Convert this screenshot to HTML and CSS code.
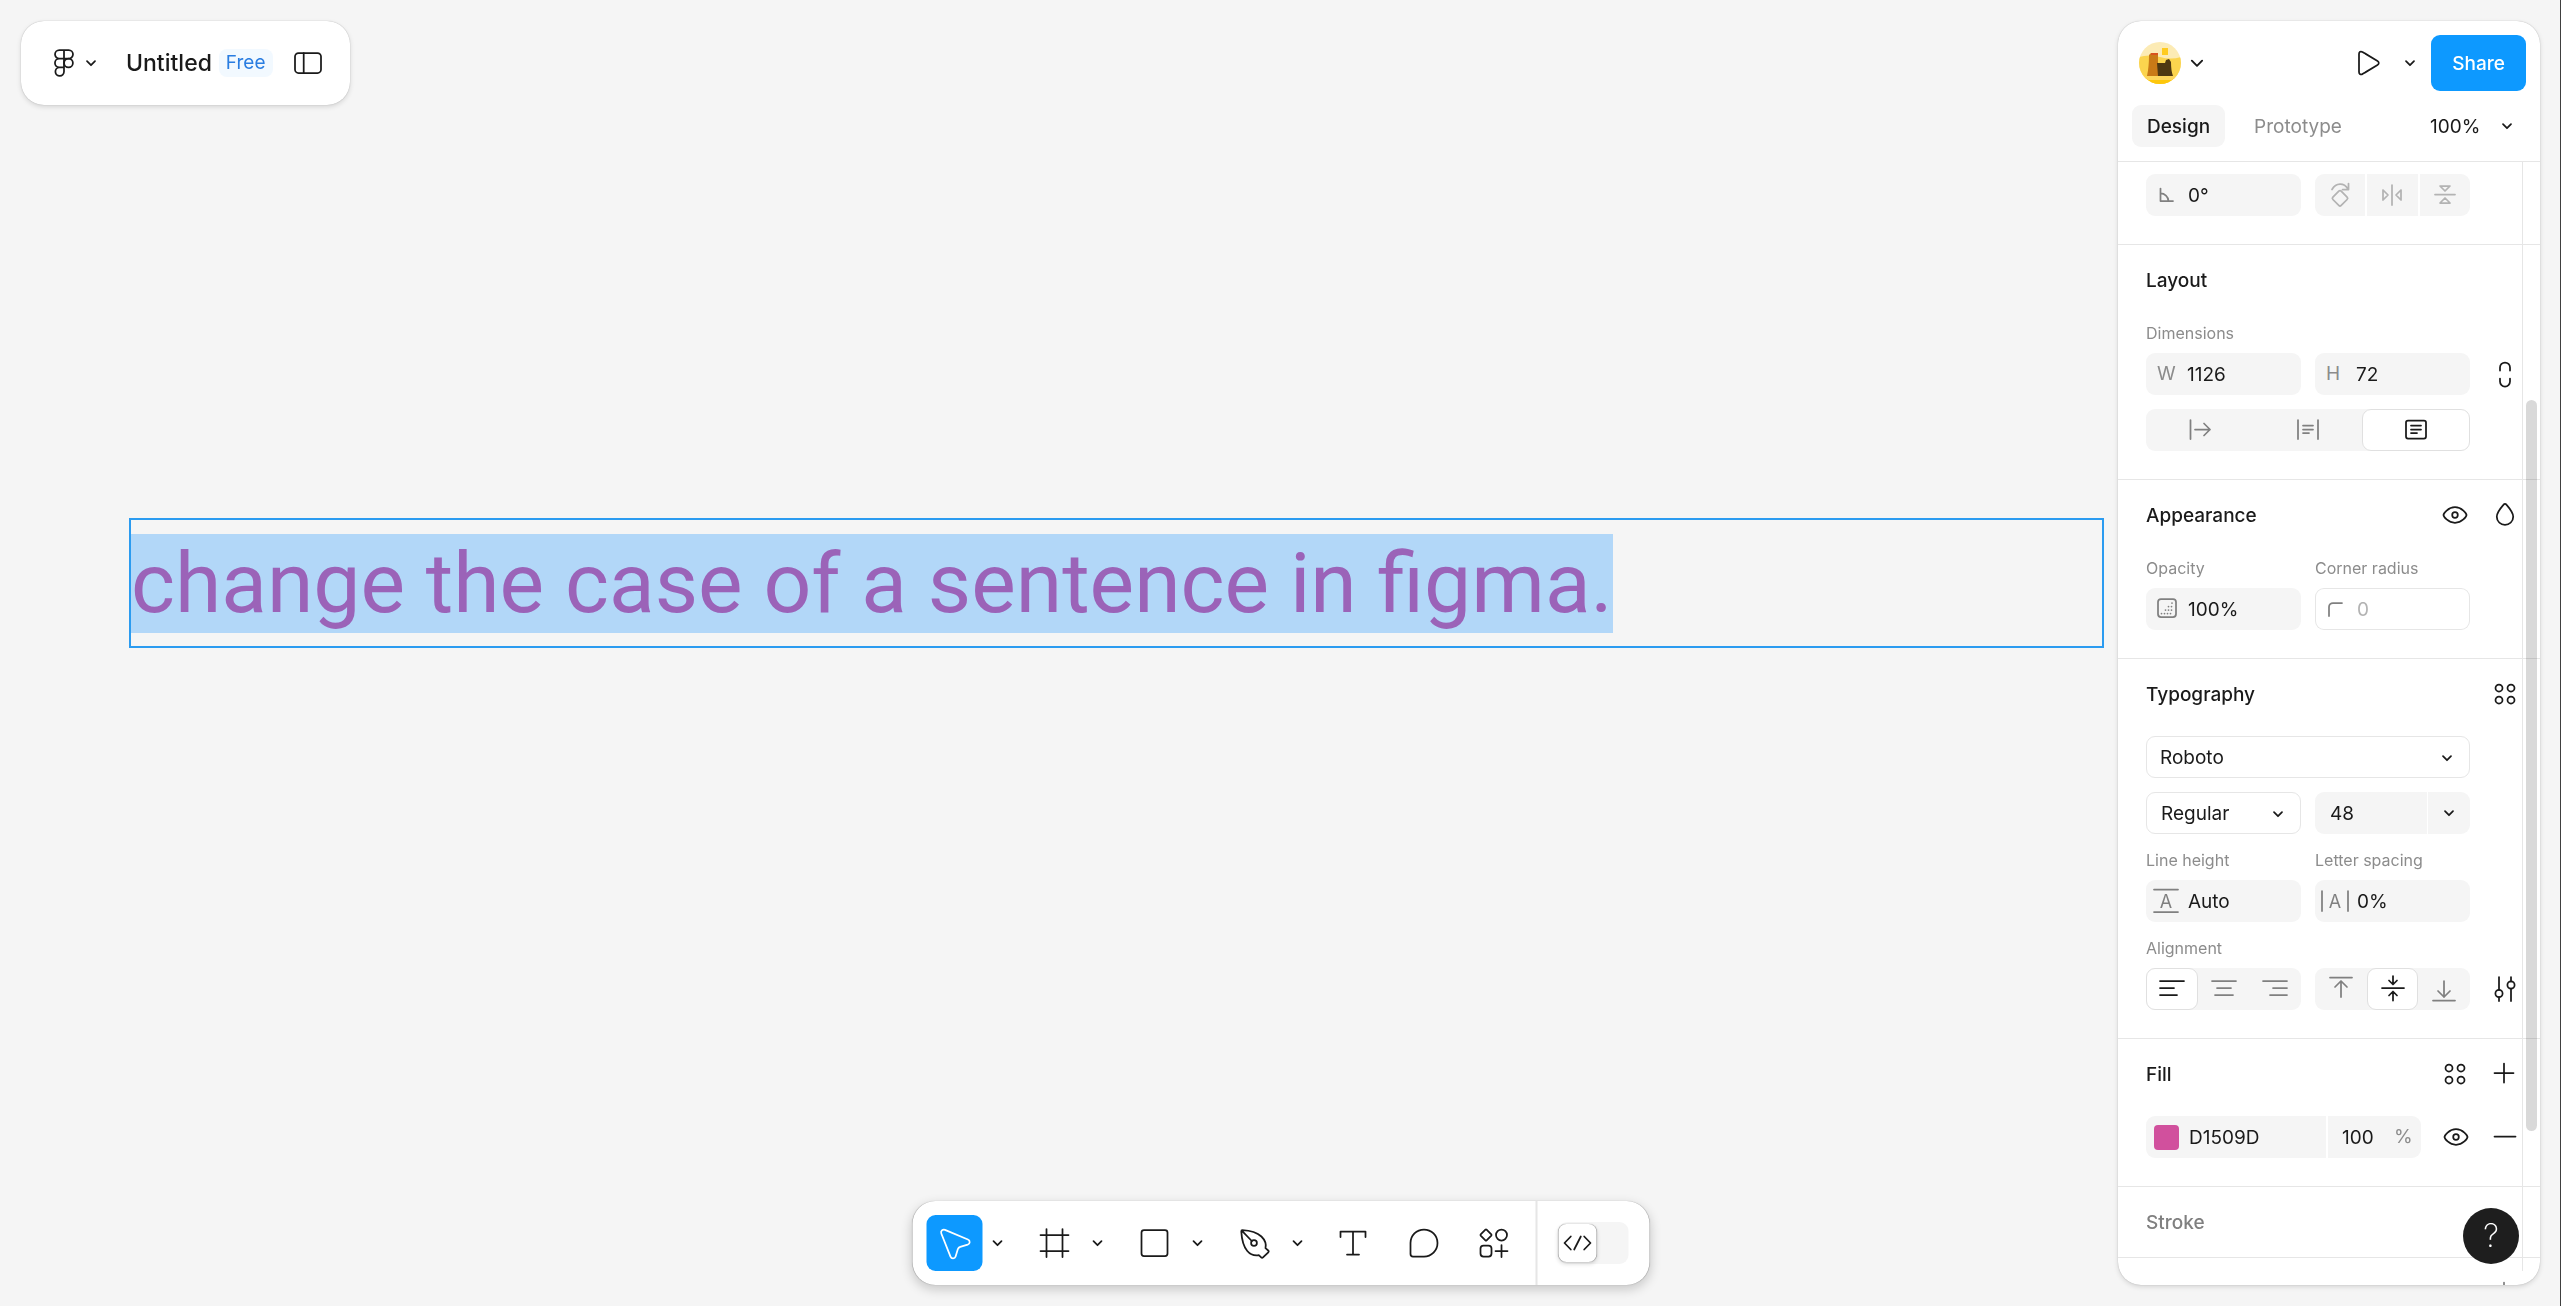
FILE: index.html
```html
<!DOCTYPE html>
<html lang="en">
<head>
    <meta charset="UTF-8">
    <meta name="viewport" content="width=device-width, initial-scale=1.0">
    <title>Untitled</title>
    <link rel="stylesheet" href="styles.css">
</head>
<body>
    <!-- Shared icons -->
    <svg class="sprite" aria-hidden="true">
        <symbol id="chevron" viewBox="0 0 14 14"><path d="M3 5.200l4 4 4-4"/></symbol>
        <symbol id="eye" viewBox="0 0 42 42"><path d="M9.500 21c0-1.500 4.500-7.800 11.500-7.800S32.500 19.500 32.500 21 28 28.800 21 28.800 9.500 22.500 9.500 21z"/><circle cx="21" cy="21" r="2.800"/></symbol>
        <symbol id="styles" viewBox="0 0 42 42"><circle cx="15" cy="15" r="3.500"/><circle cx="27" cy="15" r="3.500"/><circle cx="15" cy="27" r="3.500"/><circle cx="27" cy="27" r="3.500"/></symbol>
        <symbol id="plus" viewBox="0 0 42 42"><path d="M20 10.500v19M10.500 20h19"/></symbol>
    </svg>

    <!-- Canvas -->
    <main class="canvas">
        <div class="text-node"><span>change the case of a sentence in figma.</span></div>
    </main>

    <!-- File bar -->
    <header class="file-bar">
        <button class="menu-btn" aria-label="Main menu">
            <svg class="icon" width="20" height="28" viewBox="0 0 20 28"><path d="M10 1H5.300a4.300 4.300 0 0 0 0 8.600H10zM10 1h4.700a4.300 4.300 0 0 1 0 8.600H10zM10 9.600H5.300a4.300 4.300 0 0 0 0 8.700H10zM10 18.300H5.300A4.300 4.300 0 1 0 10 22.600z"/><circle cx="14.500" cy="14" r="4.400"/></svg>
            <svg class="icon chevron"><use href="#chevron"/></svg>
        </button>
        <span class="file-name">Untitled</span>
        <a class="plan" href="#plan">Free</a>
        <button class="sidebar-btn" aria-label="Toggle sidebar">
            <svg class="icon" width="28" height="22" viewBox="0 0 28 22"><rect x="1" y="1" width="26" height="20" rx="3.500"/><path d="M9.700 1v20"/></svg>
        </button>
    </header>

    <!-- Right panel -->
    <aside class="panel">
        <div class="panel-head">
            <div class="head-row">
                <button class="avatar-btn" aria-label="Account">
                    <svg width="42" height="42" viewBox="0 0 42 42">
                        <clipPath id="round"><circle cx="21" cy="21" r="21"/></clipPath>
                        <g clip-path="url(#round)">
                            <path fill="#fcebb5" d="M0 0h42v42H0z"/>
                            <path fill="#fbd44e" d="M0 15q10-3 21 0t21 0v27H0z"/>
                            <path fill="#fdc70c" d="M0 36h42v6H0z"/>
                            <path fill="#fdd65c" d="M0 34h42v4H0z"/>
                            <path fill="#ffcb1f" d="M23 6h6v7h-6z"/>
                            <path fill="#c97a17" d="M8 34q2-9 2-21l2-2h6l1 2v21z"/>
                            <path fill="#d9531e" d="M12 11h7v2h-7z"/>
                            <path fill="#4e3812" d="M19 34l-1-13h8l1-3 3-1 2 3q0 9 2 14z"/>
                        </g>
                    </svg>
                    <svg class="icon chevron large"><use href="#chevron"/></svg>
                </button>
                <button class="play-btn" aria-label="Present">
                    <svg class="icon" width="22" height="26" viewBox="0 0 22 26"><path d="M1 4v18c0 2 1.600 3 3.400 2.100L19.500 15c1.700-1 1.700-3 0-4L4.400 1.900C2.600.9 1 2 1 4z"/></svg>
                </button>
                <button class="play-menu" aria-label="Present options"><svg class="icon chevron"><use href="#chevron"/></svg></button>
                <button class="share-btn">Share</button>
            </div>
            <div class="head-row">
                <button class="tab active">Design</button>
                <button class="tab">Prototype</button>
                <div class="select zoom">
                    <select aria-label="Zoom"><option>100%</option></select>
                    <svg class="icon chevron"><use href="#chevron"/></svg>
                </div>
            </div>
        </div>

        <div class="panel-body">
            <section class="position">
                <div class="row">
                    <label class="field">
                        <svg class="icon muted" viewBox="0 0 42 42"><path d="M14.500 14.500V27H27M14.500 19.500a8 8 0 0 1 8 7.500"/></svg>
                        <input type="text" value="0°" aria-label="Rotation">
                    </label>
                    <div class="segments split">
                        <button aria-label="Rotate 90°"><svg class="icon faint" viewBox="0 0 42 42"><path d="M22.200 17.200l5.900 5.900a1.700 1.700 0 0 1 0 2.400l-5.900 5.900a1.700 1.700 0 0 1-2.400 0l-5.900-5.900a1.700 1.700 0 0 1 0-2.400l5.900-5.900a1.700 1.700 0 0 1 2.400 0zM13 15.500c4-7 12-7 16-.5M29.500 9.500v6h-6"/></svg></button>
                        <button aria-label="Flip horizontal"><svg class="icon faint" viewBox="0 0 42 42"><path d="M21 11v20M12 16v10l5-5zM30 16v10l-5-5z"/></svg></button>
                        <button aria-label="Flip vertical"><svg class="icon faint" viewBox="0 0 42 42"><path d="M11 20.500h20M16 12h10l-5 5zM16 29h10l-5-5z"/></svg></button>
                    </div>
                </div>
            </section>

            <section>
                <div class="section-head"><h2>Layout</h2></div>
                <div class="labels"><span>Dimensions</span></div>
                <div class="row">
                    <label class="field"><span class="letter">W</span><input type="text" value="1126"></label>
                    <label class="field"><span class="letter">H</span><input type="text" value="72"></label>
                    <button class="tool" aria-label="Lock aspect ratio"><svg class="icon" viewBox="0 0 42 42"><path d="M16 17.500v-3a5 5 0 0 1 10 0v3M16 25.500v3a5 5 0 0 0 10 0v-3"/></svg></button>
                </div>
                <div class="row gap-top">
                    <div class="segments wide">
                        <label><input type="radio" name="resize" aria-label="Auto width"><svg class="icon" viewBox="0 0 42 42"><path d="M11.500 11v19M16 20.500h15M25 14.500l6 6-6 6"/></svg></label>
                        <label><input type="radio" name="resize" aria-label="Auto height"><svg class="icon" viewBox="0 0 42 42"><path d="M11 11v19M31 11v19M16 16.500h10M16 20.500h10M16 24h6"/></svg></label>
                        <label><input type="radio" name="resize" aria-label="Fixed size" checked><svg class="icon" viewBox="0 0 42 42"><rect x="11" y="11.500" width="20" height="18" rx="2"/><path d="M16 16.500h10M16 20.500h10M16 24h6"/></svg></label>
                    </div>
                </div>
            </section>

            <section>
                <div class="section-head">
                    <h2>Appearance</h2>
                    <button class="tool" aria-label="Hide"><svg class="icon"><use href="#eye"/></svg></button>
                    <button class="tool" aria-label="Blend mode"><svg class="icon" viewBox="0 0 42 42"><path d="M21 9.800c-.6 0-1 .3-1.400.8-4.200 4.800-6.800 8.300-6.800 12.100a8.200 8.200 0 0 0 16.400 0c0-3.800-2.600-7.300-6.800-12.100-.4-.5-.8-.8-1.400-.8z"/></svg></button>
                </div>
                <div class="labels"><label for="opacity">Opacity</label><label for="radius">Corner radius</label></div>
                <div class="row">
                    <div class="field">
                        <svg class="icon muted" viewBox="0 0 42 42"><rect x="12" y="11" width="18" height="18" rx="3"/><path class="dots" d="M15.500 25.500h12M19.500 22h8M22.500 18.500h5M26 15h1.500"/></svg>
                        <input type="text" id="opacity" value="100%">
                    </div>
                    <div class="field outlined">
                        <svg class="icon muted" viewBox="0 0 42 42"><path d="M14 28v-9a4 4 0 0 1 4-4h9"/></svg>
                        <input type="text" id="radius" placeholder="0">
                    </div>
                </div>
            </section>

            <section>
                <div class="section-head">
                    <h2>Typography</h2>
                    <button class="tool" aria-label="Text styles"><svg class="icon"><use href="#styles"/></svg></button>
                </div>
                <div class="row inset">
                    <div class="select family">
                        <select aria-label="Font family"><option>Roboto</option></select>
                        <svg class="icon chevron"><use href="#chevron"/></svg>
                    </div>
                </div>
                <div class="row gap-top">
                    <div class="select">
                        <select aria-label="Font style"><option>Regular</option></select>
                        <svg class="icon chevron"><use href="#chevron"/></svg>
                    </div>
                    <div class="field size">
                        <input type="text" value="48" aria-label="Font size">
                        <button aria-label="Font sizes"><svg class="icon chevron"><use href="#chevron"/></svg></button>
                    </div>
                </div>
                <div class="labels spaced"><label for="line-height">Line height</label><label for="spacing">Letter spacing</label></div>
                <div class="row">
                    <div class="field">
                        <svg class="icon muted" viewBox="0 0 42 42"><path d="M8 9.500h24M8 32h24"/><text x="20" y="28">A</text></svg>
                        <input type="text" id="line-height" value="Auto">
                    </div>
                    <div class="field">
                        <svg class="icon muted" viewBox="0 0 42 42"><path d="M7 11v20M33 11v20"/><text x="20" y="28">A</text></svg>
                        <input type="text" id="spacing" value="0%">
                    </div>
                </div>
                <div class="labels spaced"><span>Alignment</span></div>
                <div class="row">
                    <div class="segments">
                        <label><input type="radio" name="align" aria-label="Align left" checked><svg class="icon" viewBox="0 0 42 42"><path d="M9 13h24M9 20h14M9 27h17"/></svg></label>
                        <label><input type="radio" name="align" aria-label="Align center"><svg class="icon" viewBox="0 0 42 42"><path d="M9 13h24M14 20h14M12 27h18"/></svg></label>
                        <label><input type="radio" name="align" aria-label="Align right"><svg class="icon" viewBox="0 0 42 42"><path d="M9 13h24M19 20h14M16 27h17"/></svg></label>
                    </div>
                    <div class="segments">
                        <label><input type="radio" name="valign" aria-label="Align top"><svg class="icon" viewBox="0 0 42 42"><path d="M10 9.500h22M21 29V13M15 19l6-6 6 6"/></svg></label>
                        <label><input type="radio" name="valign" aria-label="Align middle" checked><svg class="icon" viewBox="0 0 42 42"><path d="M10 20h22M21 8v8M17 12.500l4 4 4-4M21 32.500v-8M17 27.500l4-4 4 4"/></svg></label>
                        <label><input type="radio" name="valign" aria-label="Align bottom"><svg class="icon" viewBox="0 0 42 42"><path d="M10 32.500h22M21 13v16M15 23l6 6 6-6"/></svg></label>
                    </div>
                    <button class="tool" aria-label="Type settings"><svg class="icon" viewBox="0 0 42 42"><circle cx="15" cy="25.500" r="3.600"/><circle cx="27" cy="17" r="3.600"/><path d="M15 9v12.900M15 29.100V33M27 9v4.400M27 20.600V33"/></svg></button>
                </div>
            </section>

            <section>
                <div class="section-head">
                    <h2>Fill</h2>
                    <button class="tool" aria-label="Fill styles"><svg class="icon"><use href="#styles"/></svg></button>
                    <button class="tool" aria-label="Add fill"><svg class="icon"><use href="#plus"/></svg></button>
                </div>
                <div class="row inset fill-row">
                    <div class="field color">
                        <span class="swatch"></span>
                        <input type="text" value="D1509D" aria-label="Color">
                        <input class="alpha" type="text" value="100" aria-label="Fill opacity">
                        <span class="percent">%</span>
                    </div>
                    <button class="tool" aria-label="Hide fill"><svg class="icon"><use href="#eye"/></svg></button>
                    <button class="tool" aria-label="Remove fill"><svg class="icon" viewBox="0 0 42 42"><path d="M10.500 20.500h21"/></svg></button>
                </div>
            </section>

            <section class="empty">
                <div class="section-head"><h2>Stroke</h2></div>
            </section>

            <section class="empty">
                <div class="section-head">
                    <button class="tool" aria-label="Add"><svg class="icon muted"><use href="#plus"/></svg></button>
                </div>
            </section>

            <div class="scroll-track"><div class="scroll-thumb"></div></div>
        </div>
    </aside>

    <!-- Toolbar -->
    <nav class="toolbar">
        <div class="tools">
            <div class="tool-group">
                <button class="big active" aria-label="Move"><svg class="icon" viewBox="0 0 56 56"><path d="M14.800 18.500L24 41.600c1 2.400 4.300 2.300 5.100-.2l2.200-7.200c.4-1.200 1.200-2 2.400-2.400l7.500-2.100c2.500-.8 2.700-4.200.2-5.200L18.500 14.900c-2.400-.9-4.600 1.200-3.700 3.600z"/></svg></button>
                <button class="more" aria-label="Move tools"><svg class="icon chevron"><use href="#chevron"/></svg></button>
            </div>
            <div class="tool-group">
                <button class="big" aria-label="Frame"><svg class="icon" viewBox="0 0 56 56"><path d="M20 14v28M36 14v28M14 20h28M14 36h28"/></svg></button>
                <button class="more" aria-label="Region tools"><svg class="icon chevron"><use href="#chevron"/></svg></button>
            </div>
            <div class="tool-group">
                <button class="big" aria-label="Rectangle"><svg class="icon" viewBox="0 0 56 56"><rect x="15" y="15" width="26" height="26" rx="2.500"/></svg></button>
                <button class="more" aria-label="Shape tools"><svg class="icon chevron"><use href="#chevron"/></svg></button>
            </div>
            <div class="tool-group">
                <button class="big" aria-label="Pen"><svg class="icon" viewBox="0 0 56 56"><path d="M15.700 15.200c8.500.4 15 2.400 19.200 6.300 3.600 3.500 5.100 7.400 4.100 11.700l2.700 2.300c.7.600.7 1.200.1 1.800l-5.300 5.100c-.6.600-1.200.6-1.800 0l-2.400-2.200c-4.600.7-8.600-.7-11.500-4.200-3.500-4.200-5.500-10.500-6-19.400 0-.9.200-1.400.9-1.400zM15.500 15.800l9.800 10.200"/><circle cx="27.500" cy="28" r="2.900"/></svg></button>
                <button class="more" aria-label="Drawing tools"><svg class="icon chevron"><use href="#chevron"/></svg></button>
            </div>
            <button class="big" aria-label="Text"><svg class="icon" viewBox="0 0 56 56"><path d="M14 22v-5.500h25V22M26.500 16.500v23M20.500 39.500h12"/></svg></button>
            <button class="big" aria-label="Comment"><svg class="icon" viewBox="0 0 56 56"><path d="M27.500 14.500a13.500 13.500 0 0 1 0 27h-11a2.500 2.500 0 0 1-2.500-2.500V28a13.500 13.500 0 0 1 13.500-13.500z"/></svg></button>
            <button class="big" aria-label="Actions"><svg class="icon" viewBox="0 0 56 56"><path d="M20.100 14.700l4.700 4.700a.9.9 0 0 1 0 1.200l-4.700 4.700a.9.9 0 0 1-1.200 0l-4.700-4.700a.9.9 0 0 1 0-1.200l4.700-4.700a.9.9 0 0 1 1.200 0zM35 30v12M29 36h12"/><circle cx="35" cy="20" r="5.500"/><rect x="14" y="30.500" width="11" height="11" rx="3"/></svg></button>
        </div>
        <label class="dev-toggle">
            <input type="checkbox" aria-label="Dev Mode">
            <span class="knob"><svg class="icon" width="38" height="38" viewBox="0 0 38 38"><path d="M12.300 12.500L6 19l6.300 6.500M25.700 12.500L32 19l-6.300 6.500M22.300 12.500l-6.600 13"/></svg></span>
        </label>
    </nav>

    <button class="help-btn">?</button>
</body>
</html>
```

FILE: styles.css
```css
/* Base Styles */
* {
    box-sizing: border-box;
}

body {
    margin: 0;
    font-family: 'Inter', 'Liberation Sans', sans-serif;
    font-size: 19px;
    line-height: 28px;
    color: #1a1a1a;
    background: #f5f5f5;
    overflow: hidden;
}

button,
input,
select {
    margin: 0;
    padding: 0;
    border: 0;
    background: none;
    font: inherit;
    color: inherit;
    outline: none;
}

button {
    display: flex;
    align-items: center;
    justify-content: center;
    cursor: pointer;
}

.sprite {
    position: absolute;
    width: 0;
    height: 0;
}

.icon {
    display: block;
    flex: none;
    fill: none;
    stroke: #1a1a1a;
    stroke-width: 1.75;
    stroke-linecap: round;
    stroke-linejoin: round;
}

.icon.muted {
    stroke: #808080;
}

.icon.faint {
    stroke: #b3b3b3;
}

.icon text {
    font-size: 18px;
    text-anchor: middle;
    fill: #808080;
    stroke: none;
}

.icon .dots {
    stroke-dasharray: 0 3;
}

.chevron {
    width: 14px;
    height: 14px;
}

.chevron.large {
    width: 18px;
    height: 18px;
    stroke-width: 1.5;
}

/* Canvas */
.canvas {
    position: relative;
    height: 100vh;
    border-right: 1px solid #404040;
}

.text-node {
    position: absolute;
    top: 518px;
    left: 129px;
    right: 456px;
    padding: 14px 0 13px;
    border: 2px solid #2b9bf0;
    font-family: 'Roboto', sans-serif;
    font-size: 84px;
    line-height: 99px;
    color: #9b63b8;
}

.text-node span {
    display: block;
    width: fit-content;
    background: #b2d7f8;
}

/* Floating bars */
.file-bar,
.panel,
.toolbar {
    position: fixed;
    background: #fff;
    border-radius: 23px;
    box-shadow: 0 0 1px rgba(0, 0, 0, 0.35), 0 2px 5px rgba(0, 0, 0, 0.13);
}

.file-bar {
    top: 21px;
    left: 21px;
    height: 84px;
    padding: 0 28px 0 33px;
    display: flex;
    align-items: center;
}

.menu-btn {
    gap: 10px;
}

.file-name {
    margin-left: 28px;
    font-size: 23px;
    font-weight: 500;
}

.plan {
    margin: 0 21px 0 7px;
    padding: 0 7px;
    border-radius: 8px;
    background: #f2f9ff;
    color: #2a7de1;
    text-decoration: none;
}

/* Right panel */
.panel {
    top: 21px;
    right: 21px;
    bottom: 21px;
    width: 422px;
    display: flex;
    flex-direction: column;
    overflow: hidden;
}

.panel-head {
    padding: 14px;
    display: flex;
    flex-direction: column;
    gap: 14px;
    border-bottom: 1px solid #e6e6e6;
}

.head-row {
    display: flex;
    align-items: center;
}

.avatar-btn {
    margin-left: 7px;
    gap: 7px;
}

.play-btn {
    margin-left: auto;
}

.play-menu {
    padding: 0 14px 0 23px;
}

.share-btn {
    width: 95px;
    height: 56px;
    padding-top: 1px;
    border-radius: 9px;
    background: #0d99ff;
    color: #fff;
    font-weight: 500;
}

.tab {
    height: 42px;
    margin-right: 14px;
    padding: 1px 15px 0;
    border-radius: 9px;
    color: #8c8c8c;
}

.tab.active {
    background: #f5f5f5;
    color: #1a1a1a;
    font-weight: 500;
}

.panel-body {
    position: relative;
    flex: 1;
    min-height: 0;
    overflow: hidden;
}

section {
    padding-bottom: 28px;
    border-bottom: 1px solid #e6e6e6;
}

section.position {
    padding-top: 12px;
}

section.empty {
    padding-bottom: 0;
}

.section-head {
    height: 70px;
    padding: 0 14px 0 28px;
    display: flex;
    align-items: center;
    justify-content: flex-end;
    gap: 8px;
}

h2 {
    margin: 0 auto 0 0;
    padding-top: 2px;
    font-size: 19px;
    font-weight: 500;
}

.empty h2 {
    color: #808080;
}

.row,
.labels {
    display: flex;
    gap: 14px;
    padding: 0 14px 0 28px;
}

.row.inset {
    padding-top: 7px;
}

.row.gap-top {
    padding-top: 14px;
}

.labels {
    padding-bottom: 2px;
    font-size: 16px;
    line-height: 36px;
    color: #8c8c8c;
}

.labels.spaced {
    padding-top: 8px;
}

.labels > * {
    width: 155px;
}

.tool {
    width: 42px;
    height: 42px;
}

.tool .icon,
.field > .icon {
    width: 42px;
    height: 42px;
}

/* Inputs */
.field {
    display: flex;
    align-items: center;
    width: 155px;
    height: 42px;
    border-radius: 9px;
    background: #f5f5f5;
}

.field.outlined {
    background: #fff;
    box-shadow: inset 0 0 0 1px #e6e6e6;
}

.field input {
    flex: 1;
    min-width: 0;
    height: 42px;
}

.field input::placeholder {
    color: #b3b3b3;
}

.letter {
    width: 41px;
    padding-left: 11px;
    color: #8c8c8c;
}

.field.size input {
    padding-left: 15px;
}

.field.size button {
    width: 43px;
    height: 42px;
    border-left: 1px solid #fff;
}

.field.color {
    width: 275px;
}

.fill-row .tool:last-child {
    margin-left: -7px;
}

.swatch {
    width: 25px;
    height: 25px;
    margin: 0 10px 0 8px;
    border-radius: 4px;
    background: #d1509d;
}

.field .alpha {
    flex: none;
    width: 68px;
    padding-left: 14px;
    border-left: 2px solid #fff;
}

.percent {
    width: 27px;
    color: #8c8c8c;
}

/* Selects */
.select {
    position: relative;
    width: 155px;
    height: 42px;
    border: 1px solid #e6e6e6;
    border-radius: 9px;
}

.select select {
    width: 100%;
    height: 40px;
    padding: 1px 0 0 14px;
    appearance: none;
}

.select .chevron {
    position: absolute;
    top: 14px;
    right: 15px;
    pointer-events: none;
}

.select.family {
    width: 324px;
}

.select.family select {
    padding-left: 13px;
}

.select.zoom {
    width: 96px;
    margin-left: auto;
    border: 0;
}

.select.zoom select {
    height: 42px;
    padding-left: 0;
}

.select.zoom .chevron {
    right: 12px;
}

/* Segmented controls */
.segments {
    display: flex;
    width: 155px;
    height: 42px;
    border-radius: 9px;
    background: #f5f5f5;
}

.segments.wide {
    width: 324px;
}

.segments > * {
    position: relative;
    flex: 1;
    display: flex;
    justify-content: center;
}

.segments .icon {
    position: relative;
    width: 42px;
    height: 42px;
}

.segments label .icon {
    stroke: #808080;
}

.segments.split > * + * {
    border-left: 2px solid #fff;
}

.segments input {
    position: absolute;
    inset: 0;
    appearance: none;
    border-radius: 9px;
}

.segments input:checked {
    border: 1px solid #e0e0e0;
    background: #fff;
}

.segments input:checked + .icon {
    stroke: #1a1a1a;
}

/* Scrollbar */
.scroll-track {
    position: absolute;
    top: 0;
    right: 0;
    bottom: 14px;
    width: 18px;
    padding: 238px 3px 140px;
    border-left: 1px solid #e6e6e6;
}

.scroll-thumb {
    width: 11px;
    height: 100%;
    border-radius: 6px;
    background: rgba(0, 0, 0, 0.15);
}

/* Toolbar */
.toolbar {
    left: 50%;
    bottom: 21px;
    height: 84px;
    display: flex;
    transform: translateX(-50%);
    box-shadow: 0 0 1px rgba(0, 0, 0, 0.3), 0 4px 12px rgba(0, 0, 0, 0.2);
}

.tools {
    display: flex;
    align-items: center;
    gap: 14px;
    padding: 0 13px 0 14px;
    border-right: 2px solid #e6e6e6;
}

.tool-group {
    display: flex;
}

.big,
.big .icon {
    width: 56px;
    height: 56px;
}

.big.active {
    border-radius: 9px;
    background: #0d99ff;
}

.big.active .icon {
    stroke: #fff;
}

.more {
    width: 30px;
}

.dev-toggle {
    position: relative;
    width: 70px;
    height: 42px;
    margin: 21px;
    padding: 2px 0;
    border-radius: 9px;
    background: #f5f5f5;
}

.dev-toggle input {
    position: absolute;
    inset: 0;
    appearance: none;
}

.knob {
    position: relative;
    display: block;
    width: 38px;
    height: 38px;
    border-radius: 8px;
    background: #fff;
    box-shadow: 0 0 1px rgba(0, 0, 0, 0.4), 0 2px 4px rgba(0, 0, 0, 0.15);
}

/* Help */
.help-btn {
    position: fixed;
    right: 42px;
    bottom: 42px;
    width: 56px;
    height: 56px;
    border-radius: 50%;
    background: #1e1e1e;
    color: #fff;
    font-size: 32px;
    font-weight: 200;
}
```
